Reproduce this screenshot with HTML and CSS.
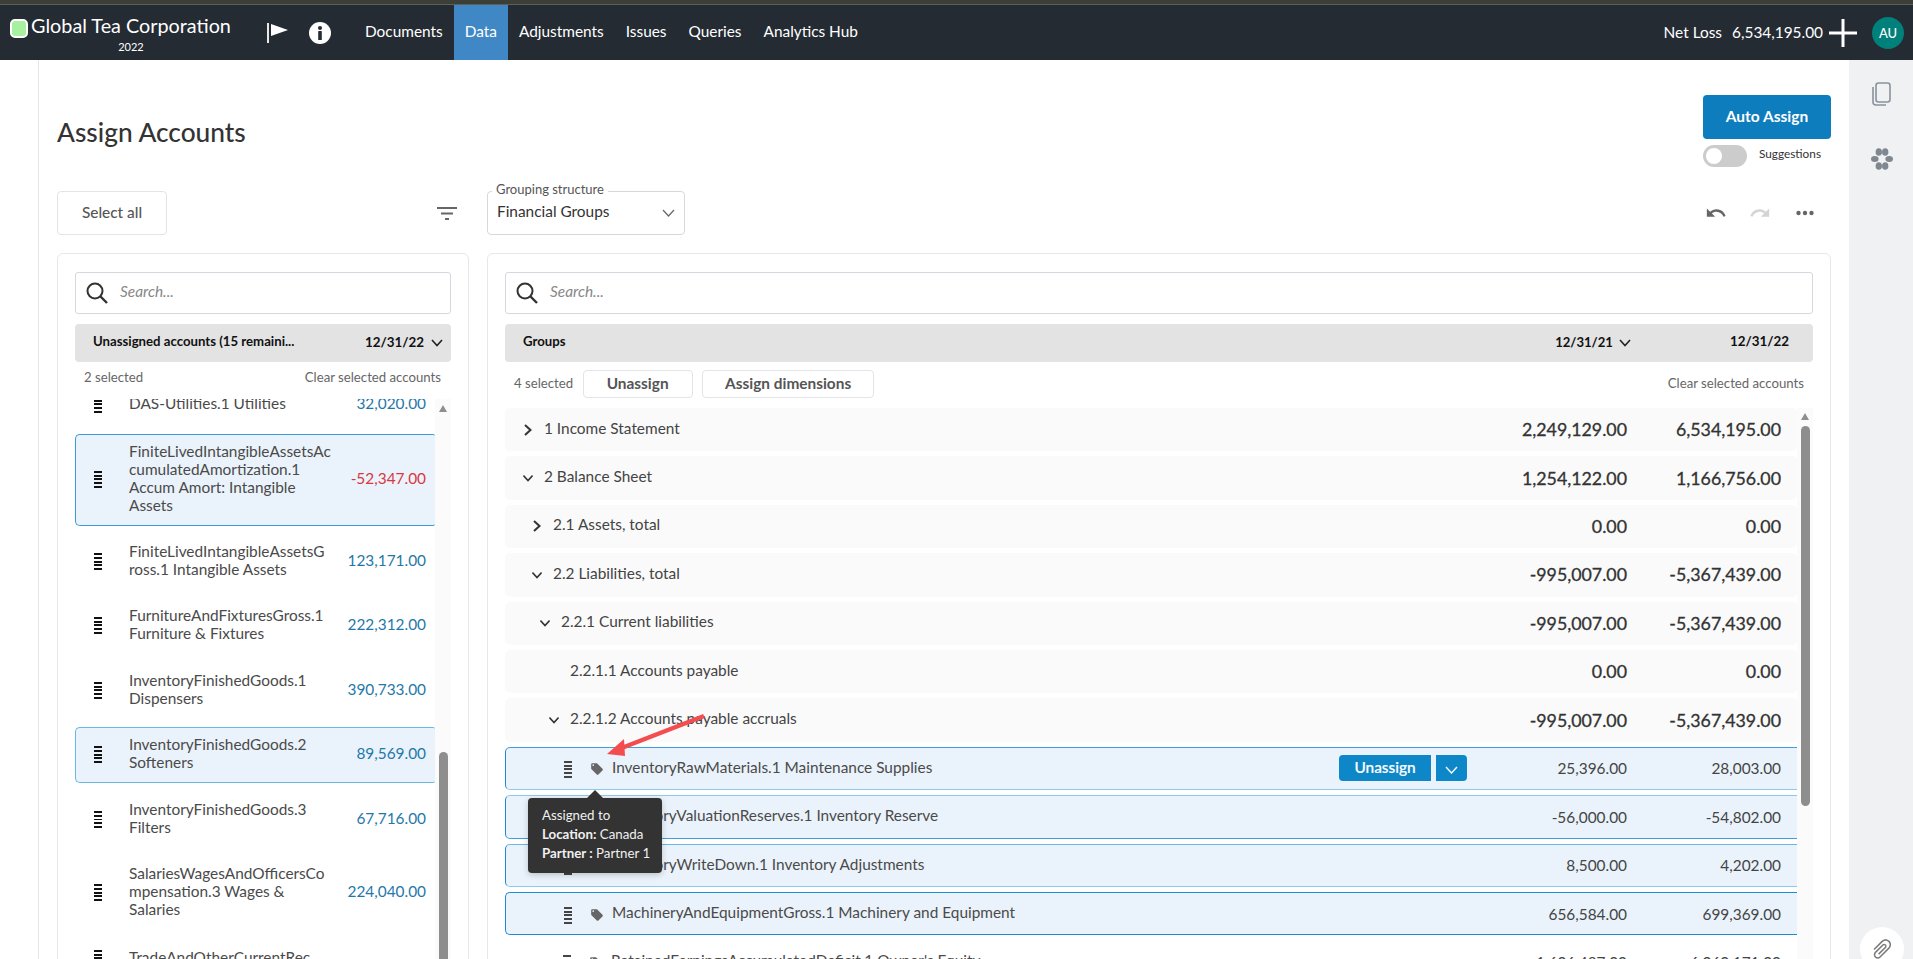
FILE: index.html
```html
<!DOCTYPE html>
<html>
	<head>
		<meta charset="UTF-8">
		<title>Assign Accounts</title>
		<link rel="stylesheet" href="styles.css">
	</head>
	<body>
		<div class="strip"></div>
		<header class="topbar">
			<div class="logo"></div>
			<div class="brand">
				<span class="brand-name">Global Tea Corporation</span>
				<span class="brand-year">2022</span>
			</div>
			<svg class="flag" width="21" height="20" viewBox="0 0 21 20"><rect x="0" y="0" width="2" height="20" fill="#e8e8e8"/><path d="M4 1 L21 7 L4 13 Z" fill="#fff"/></svg>
			<svg class="info" width="22" height="22" viewBox="0 0 22 22"><circle cx="11" cy="11" r="11" fill="#fff"/><circle cx="11" cy="6" r="2" fill="#242b33"/><rect x="9.2" y="9" width="3.6" height="9" rx="0.6" fill="#242b33"/></svg>
			<nav class="nav">
				<a>Documents</a>
				<a class="active">Data</a>
				<a>Adjustments</a>
				<a>Issues</a>
				<a>Queries</a>
				<a>Analytics Hub</a>
			</nav>
			<div class="net">
				<span>Net Loss</span>
				<span>6,534,195.00</span>
			</div>
			<svg class="plus" width="28" height="28" viewBox="0 0 28 28"><rect x="0" y="12.5" width="28" height="3" fill="#fff"/><rect x="12.5" y="0" width="3" height="28" fill="#fff"/></svg>
			<div class="avatar">AU</div>
		</header>

		<div class="content">
			<div class="gutter"></div>
			<main class="main">
				<div class="page-head">
					<h1>Assign Accounts</h1>
					<div class="auto-box">
						<button class="auto-btn">Auto Assign</button>
						<div class="toggle-row">
							<span class="toggle"><i></i></span>
							<span class="toggle-label">Suggestions</span>
						</div>
					</div>
				</div>

				<div class="toolbar">
					<button class="ghost-btn select-all">Select all</button>
					<svg class="filter" width="20" height="13" viewBox="0 0 20 13"><rect x="0" y="0" width="20" height="2" fill="#666"/><rect x="4" y="5.5" width="12" height="2" fill="#666"/><rect x="8" y="11" width="4" height="2" fill="#666"/></svg>
					<div class="select-box">
						<span class="legend">Grouping structure</span>
						<span class="select-value">Financial Groups</span>
						<svg width="13" height="8" viewBox="0 0 13 8"><path d="M1 1 L6.5 7 L12 1" fill="none" stroke="#666" stroke-width="1.2"/></svg>
					</div>
					<div class="history">
						<svg width="22" height="22" viewBox="0 0 24 24"><path fill="#666" d="M12.5 8c-2.65 0-5.05.99-6.9 2.6L2 7v9h9l-3.62-3.62c1.39-1.16 3.16-1.88 5.12-1.88 3.54 0 6.55 2.31 7.6 5.5l2.37-.78C21.08 11.03 17.15 8 12.5 8z"/></svg>
						<svg width="22" height="22" viewBox="0 0 24 24"><path fill="#d4d4d4" d="M18.4 10.6C16.55 8.99 14.15 8 11.5 8c-4.65 0-8.58 3.03-9.96 7.22L3.9 16c1.05-3.19 4.05-5.5 7.6-5.5 1.95 0 3.73.72 5.12 1.88L13 16h9V7l-3.6 3.6z"/></svg>
						<svg class="dots" width="18" height="6" viewBox="0 0 18 6"><circle cx="2.5" cy="3" r="2.2" fill="#666"/><circle cx="9" cy="3" r="2.2" fill="#666"/><circle cx="15.5" cy="3" r="2.2" fill="#666"/></svg>
					</div>
				</div>

				<div class="panels">
					<section class="panel panel-left">
						<div class="search">
							<svg width="22" height="22" viewBox="0 0 22 22"><circle cx="9" cy="9" r="7.5" fill="none" stroke="#333" stroke-width="2"/><path d="M14.5 14.5 L21 21" stroke="#333" stroke-width="2.4"/></svg>
							<span>Search...</span>
						</div>
						<div class="col-head">
							<b class="col-title">Unassigned accounts (15 remaini...</b>
							<b class="col-date">12/31/22</b>
							<svg width="12" height="8" viewBox="0 0 12 8"><path d="M1 1 L6 6.5 L11 1" fill="none" stroke="#222" stroke-width="1.6"/></svg>
						</div>
						<div class="sel-line">
							<span>2 selected</span>
							<span>Clear selected accounts</span>
						</div>
						<div class="scroll-area">
							<div class="acc-list">
								<div class="acc acc-clipped">
									<span class="grip"></span>
									<span class="acc-name">DAS-Utilities.1 Utilities</span>
									<span class="acc-val">32,020.00</span>
								</div>
								<div class="acc sel acc-first">
									<span class="grip"></span>
									<span class="acc-name">FiniteLivedIntangibleAssetsAc<br>cumulatedAmortization.1<br>Accum Amort: Intangible<br>Assets</span>
									<span class="acc-val neg">-52,347.00</span>
								</div>
								<div class="acc">
									<span class="grip"></span>
									<span class="acc-name">FiniteLivedIntangibleAssetsG<br>ross.1 Intangible Assets</span>
									<span class="acc-val">123,171.00</span>
								</div>
								<div class="acc">
									<span class="grip"></span>
									<span class="acc-name">FurnitureAndFixturesGross.1<br>Furniture &amp; Fixtures</span>
									<span class="acc-val">222,312.00</span>
								</div>
								<div class="acc">
									<span class="grip"></span>
									<span class="acc-name">InventoryFinishedGoods.1<br>Dispensers</span>
									<span class="acc-val">390,733.00</span>
								</div>
								<div class="acc sel soft">
									<span class="grip"></span>
									<span class="acc-name">InventoryFinishedGoods.2<br>Softeners</span>
									<span class="acc-val">89,569.00</span>
								</div>
								<div class="acc">
									<span class="grip"></span>
									<span class="acc-name">InventoryFinishedGoods.3<br>Filters</span>
									<span class="acc-val">67,716.00</span>
								</div>
								<div class="acc">
									<span class="grip"></span>
									<span class="acc-name">SalariesWagesAndOfficersCo<br>mpensation.3 Wages &amp;<br>Salaries</span>
									<span class="acc-val">224,040.00</span>
								</div>
								<div class="acc">
									<span class="grip"></span>
									<span class="acc-name">TradeAndOtherCurrentRec</span>
									<span class="acc-val"></span>
								</div>
							</div>
							<div class="track track-left">
								<i class="arrow"></i>
								<i class="thumb"></i>
							</div>
						</div>
					</section>

					<section class="panel panel-right">
						<div class="search">
							<svg width="22" height="22" viewBox="0 0 22 22"><circle cx="9" cy="9" r="7.5" fill="none" stroke="#333" stroke-width="2"/><path d="M14.5 14.5 L21 21" stroke="#333" stroke-width="2.4"/></svg>
							<span>Search...</span>
						</div>
						<div class="col-head">
							<b class="col-title">Groups</b>
							<span class="date-one">
								<b class="col-date">12/31/21</b>
								<svg width="12" height="8" viewBox="0 0 12 8"><path d="M1 1 L6 6.5 L11 1" fill="none" stroke="#222" stroke-width="1.6"/></svg>
							</span>
							<b class="col-date date-two">12/31/22</b>
						</div>
						<div class="action-line">
							<span class="count">4 selected</span>
							<button class="ghost-btn small wide-1">Unassign</button>
							<button class="ghost-btn small wide-2">Assign dimensions</button>
							<span class="clear">Clear selected accounts</span>
						</div>
						<div class="scroll-area">
							<div class="tree">
								<div class="row lvl-0">
									<svg class="chev" width="10" height="12" viewBox="0 0 10 12"><path d="M2 1 L7.5 6 L2 11" fill="none" stroke="#333" stroke-width="2"/></svg>
									<span class="name">1 Income Statement</span>
									<span class="amt big">2,249,129.00</span>
									<span class="amt big last">6,534,195.00</span>
								</div>
								<div class="row lvl-0">
									<svg class="chev" width="10" height="12" viewBox="0 0 12 12"><path d="M0.5 3 L6 9 L11.5 3" fill="none" stroke="#333" stroke-width="2"/></svg>
									<span class="name">2 Balance Sheet</span>
									<span class="amt big">1,254,122.00</span>
									<span class="amt big last">1,166,756.00</span>
								</div>
								<div class="row lvl-1">
									<svg class="chev" width="10" height="12" viewBox="0 0 10 12"><path d="M2 1 L7.5 6 L2 11" fill="none" stroke="#333" stroke-width="2"/></svg>
									<span class="name">2.1 Assets, total</span>
									<span class="amt big">0.00</span>
									<span class="amt big last">0.00</span>
								</div>
								<div class="row lvl-1">
									<svg class="chev" width="10" height="12" viewBox="0 0 12 12"><path d="M0.5 3 L6 9 L11.5 3" fill="none" stroke="#333" stroke-width="2"/></svg>
									<span class="name">2.2 Liabilities, total</span>
									<span class="amt big">-995,007.00</span>
									<span class="amt big last">-5,367,439.00</span>
								</div>
								<div class="row lvl-2">
									<svg class="chev" width="10" height="12" viewBox="0 0 12 12"><path d="M0.5 3 L6 9 L11.5 3" fill="none" stroke="#333" stroke-width="2"/></svg>
									<span class="name">2.2.1 Current liabilities</span>
									<span class="amt big">-995,007.00</span>
									<span class="amt big last">-5,367,439.00</span>
								</div>
								<div class="row lvl-3 no-chev">
									<span class="name">2.2.1.1 Accounts payable</span>
									<span class="amt big">0.00</span>
									<span class="amt big last">0.00</span>
								</div>
								<div class="row lvl-3">
									<svg class="chev" width="10" height="12" viewBox="0 0 12 12"><path d="M0.5 3 L6 9 L11.5 3" fill="none" stroke="#333" stroke-width="2"/></svg>
									<span class="name">2.2.1.2 Accounts payable accruals</span>
									<span class="amt big">-995,007.00</span>
									<span class="amt big last">-5,367,439.00</span>
								</div>
								<div class="row leaf sel edge-a">
									<span class="grip"></span>
									<svg class="tag" width="14" height="14" viewBox="0 0 24 24"><path fill="#666" d="M21.41 11.58l-9-9C12.05 2.22 11.55 2 11 2H4c-1.1 0-2 .9-2 2v7c0 .55.22 1.05.59 1.42l9 9c.36.36.86.58 1.41.58.55 0 1.05-.22 1.41-.59l7-7c.37-.36.59-.86.59-1.41 0-.55-.23-1.06-.59-1.42zM5.5 7C4.67 7 4 6.33 4 5.5S4.67 4 5.5 4 7 4.67 7 5.5 6.33 7 5.5 7z"/></svg>
									<span class="name">InventoryRawMaterials.1 Maintenance Supplies</span>
									<button class="blue-btn">Unassign</button>
									<button class="blue-btn caret"><svg width="13" height="8" viewBox="0 0 13 8"><path d="M1 1 L6.5 7 L12 1" fill="none" stroke="#fff" stroke-width="1.4"/></svg></button>
									<span class="amt">25,396.00</span>
									<span class="amt last">28,003.00</span>
									<svg class="red-arrow" width="120" height="45" viewBox="0 0 120 45"><path d="M28 36 L113 3" stroke="#f44d4f" stroke-width="4.5"/><path d="M16 41 L33 26 L34 43 Z" fill="#f44d4f"/></svg>
									<div class="tooltip">
										<div>Assigned to</div>
										<div><b>Location:</b> Canada</div>
										<div><b>Partner :</b> Partner 1</div>
									</div>
								</div>
								<div class="row leaf sel edge-b">
									<span class="grip"></span>
									<svg class="tag" width="14" height="14" viewBox="0 0 24 24"><path fill="#666" d="M21.41 11.58l-9-9C12.05 2.22 11.55 2 11 2H4c-1.1 0-2 .9-2 2v7c0 .55.22 1.05.59 1.42l9 9c.36.36.86.58 1.41.58.55 0 1.05-.22 1.41-.59l7-7c.37-.36.59-.86.59-1.41 0-.55-.23-1.06-.59-1.42zM5.5 7C4.67 7 4 6.33 4 5.5S4.67 4 5.5 4 7 4.67 7 5.5 6.33 7 5.5 7z"/></svg>
									<span class="name">InventoryValuationReserves.1 Inventory Reserve</span>
									<span class="amt">-56,000.00</span>
									<span class="amt last">-54,802.00</span>
								</div>
								<div class="row leaf sel edge-c">
									<span class="grip"></span>
									<svg class="tag" width="14" height="14" viewBox="0 0 24 24"><path fill="#666" d="M21.41 11.58l-9-9C12.05 2.22 11.55 2 11 2H4c-1.1 0-2 .9-2 2v7c0 .55.22 1.05.59 1.42l9 9c.36.36.86.58 1.41.58.55 0 1.05-.22 1.41-.59l7-7c.37-.36.59-.86.59-1.41 0-.55-.23-1.06-.59-1.42zM5.5 7C4.67 7 4 6.33 4 5.5S4.67 4 5.5 4 7 4.67 7 5.5 6.33 7 5.5 7z"/></svg>
									<span class="name">InventoryWriteDown.1 Inventory Adjustments</span>
									<span class="amt">8,500.00</span>
									<span class="amt last">4,202.00</span>
								</div>
								<div class="row leaf sel">
									<span class="grip"></span>
									<svg class="tag" width="14" height="14" viewBox="0 0 24 24"><path fill="#666" d="M21.41 11.58l-9-9C12.05 2.22 11.55 2 11 2H4c-1.1 0-2 .9-2 2v7c0 .55.22 1.05.59 1.42l9 9c.36.36.86.58 1.41.58.55 0 1.05-.22 1.41-.59l7-7c.37-.36.59-.86.59-1.41 0-.55-.23-1.06-.59-1.42zM5.5 7C4.67 7 4 6.33 4 5.5S4.67 4 5.5 4 7 4.67 7 5.5 6.33 7 5.5 7z"/></svg>
									<span class="name">MachineryAndEquipmentGross.1 Machinery and Equipment</span>
									<span class="amt">656,584.00</span>
									<span class="amt last">699,369.00</span>
								</div>
								<div class="row leaf plain">
									<span class="grip"></span>
									<svg class="tag" width="14" height="14" viewBox="0 0 24 24"><path fill="#666" d="M21.41 11.58l-9-9C12.05 2.22 11.55 2 11 2H4c-1.1 0-2 .9-2 2v7c0 .55.22 1.05.59 1.42l9 9c.36.36.86.58 1.41.58.55 0 1.05-.22 1.41-.59l7-7c.37-.36.59-.86.59-1.41 0-.55-.23-1.06-.59-1.42zM5.5 7C4.67 7 4 6.33 4 5.5S4.67 4 5.5 4 7 4.67 7 5.5 6.33 7 5.5 7z"/></svg>
									<span class="name">RetainedEarningsAccumulatedDeficit.1 Owner's Equity</span>
									<span class="amt">1,606,487.00</span>
									<span class="amt last">6,060,171.00</span>
								</div>
							</div>
							<div class="track track-right">
								<i class="arrow"></i>
								<i class="thumb"></i>
							</div>
						</div>
					</section>
				</div>
			</main>
			<aside class="side">
				<svg class="side-copy" width="20" height="24" viewBox="0 0 20 24"><rect x="5" y="1" width="14" height="19" rx="2.5" fill="none" stroke="#8a929c" stroke-width="1.6"/><path d="M2 5 V20 C2 22 3 23 5 23 H15" fill="none" stroke="#8a929c" stroke-width="1.6"/></svg>
				<svg class="side-paw" width="22" height="22" viewBox="0 0 22 22"><ellipse cx="7.8" cy="4" rx="3.2" ry="3.8" fill="#7f8891"/><ellipse cx="14.2" cy="4" rx="3.2" ry="3.8" fill="#7f8891"/><ellipse cx="3.8" cy="11" rx="3.8" ry="3" fill="#7f8891"/><ellipse cx="18.2" cy="11" rx="3.8" ry="3" fill="#7f8891"/><ellipse cx="7.8" cy="18" rx="3.2" ry="3.8" fill="#7f8891"/><ellipse cx="14.2" cy="18" rx="3.2" ry="3.8" fill="#7f8891"/></svg>
			</aside>
			<div class="clip-btn">
				<svg width="24" height="24" viewBox="0 0 24 24"><path fill="#7a7a7a" d="M16.5 6v11.5c0 2.21-1.79 4-4 4s-4-1.79-4-4V5c0-1.38 1.12-2.5 2.5-2.5s2.5 1.12 2.5 2.5v10.5c0 .55-.45 1-1 1s-1-.45-1-1V6H10v9.5c0 1.38 1.12 2.5 2.5 2.5s2.5-1.12 2.5-2.5V5c0-2.21-1.79-4-4-4S7 2.79 7 5v12.5c0 3.04 2.46 5.5 5.5 5.5s5.5-2.46 5.5-5.5V6h-1.5z"/></svg>
			</div>
		</div>
	</body>
</html>
```
FILE: styles.css
```css
*{
	margin: 0;
	padding: 0;
	box-sizing: border-box;
}
html,body{
	height: 100%;
	overflow: hidden;
}
body{
	font-family: "Lato", "Open Sans", sans-serif;
	font-size: 15.4px;
	color: #444;
	background: #fff;
}
button{
	font-family: inherit;
	cursor: pointer;
}

.strip{
	height: 5px;
	background: #3b3f36;
	border-bottom: 1px solid #5c6058;
}
.topbar{
	height: 55px;
	background: #242b33;
	color: #fff;
	display: flex;
	align-items: center;
	padding-left: 10px;
}
.logo{
	width: 18px;
	height: 19px;
	margin-top: -9px;
	background: #a6f09f;
	border: 2px solid #fff;
	border-radius: 5px;
}
.brand{
	width: 200px;
	margin: 2px 0 0 3px;
	display: flex;
	flex-direction: column;
	align-items: center;
}
.brand-name{
	font-size: 19.8px;
	line-height: 24px;
	white-space: nowrap;
}
.brand-year{
	font-size: 11px;
	line-height: 14px;
	margin-top: 3px;
}
.flag{
	margin-left: 36px;
}
.info{
	margin-left: 21px;
}
.nav{
	display: flex;
	height: 100%;
	margin-left: 23px;
}
.nav a{
	padding: 0 11px;
	line-height: 53px;
	white-space: nowrap;
}
.nav a.active{
	background: #3f88c5;
}
.net{
	margin: 0 0 2px auto;
	display: flex;
	gap: 10px;
	white-space: nowrap;
}
.plus{
	margin-left: 6px;
}
.avatar{
	width: 32px;
	height: 32px;
	margin: 0 9px 0 15px;
	border-radius: 50%;
	background: #00807b;
	font-size: 13px;
	font-weight: 500;
	line-height: 32px;
	text-align: center;
}

.content{
	display: flex;
	height: calc(100vh - 60px);
	position: relative;
	overflow: hidden;
}
.gutter{
	width: 39px;
	flex: none;
	border-right: 1px solid #e6e6e6;
}
.main{
	flex: 1;
	min-width: 0;
	padding: 35px 18px 0;
}
.page-head{
	display: flex;
	justify-content: space-between;
	align-items: center;
}
h1{
	font-family: "Lato Medium", "Lato", sans-serif;
	font-size: 26.3px;
	font-weight: 500;
	color: #333;
	margin-top: 2px;
}
.auto-box{
	width: 128px;
}
.auto-btn{
	display: block;
	width: 100%;
	height: 44px;
	padding-bottom: 2px;
	background: #0d7dbd;
	border: 0;
	border-radius: 4px;
	color: #fff;
	font-size: 15.5px;
	font-weight: 700;
}
.toggle-row{
	display: flex;
	margin-top: 6px;
}
.toggle{
	width: 44px;
	height: 22px;
	border-radius: 11px;
	background: #ccc;
	padding: 3px;
}
.toggle i{
	display: block;
	width: 16px;
	height: 16px;
	border-radius: 50%;
	background: #fff;
}
.toggle-label{
	margin-left: 12px;
	font-size: 11.8px;
	line-height: 18px;
	color: #333;
}

.toolbar{
	display: flex;
	align-items: center;
	height: 44px;
	margin-top: 24px;
}
.ghost-btn{
	background: #fff;
	border: 1px solid #e2e4e8;
	border-radius: 4px;
	color: #555;
	font-size: 15.4px;
	font-family: "Lato Medium", "Lato", sans-serif;
	font-weight: 500;
}
.select-all{
	width: 110px;
	height: 44px;
	padding-bottom: 2px;
}
.filter{
	margin-left: 270px;
}
.select-box{
	width: 198px;
	height: 44px;
	margin-left: 30px;
	border: 1px solid #d6d8dc;
	border-radius: 4px;
	position: relative;
	display: flex;
	align-items: center;
	justify-content: space-between;
	padding: 0 9px;
}
.legend{
	position: absolute;
	left: 4px;
	top: -11px;
	padding: 0 4px;
	background: #fff;
	font-size: 13px;
	line-height: 16px;
	color: #555;
}
.select-value{
	color: #333;
	margin-top: -5px;
}
.history{
	margin-left: auto;
	display: flex;
	align-items: center;
	gap: 22px;
	padding-right: 17px;
}
.dots{
	margin-left: 3.5px;
}

.panels{
	display: flex;
	gap: 18px;
	height: 760px;
	margin-top: 18px;
}
.panel{
	border: 1px solid #e6e7ea;
	border-radius: 6px;
	padding: 18px 17px 0;
	display: flex;
	flex-direction: column;
}
.panel-left{
	width: 412px;
}
.panel-right{
	flex: 1;
	min-width: 0;
}
.search{
	height: 42px;
	flex: none;
	border: 1px solid #d5d9df;
	border-radius: 3px;
	display: flex;
	align-items: center;
	padding-left: 10px;
}
.search span{
	margin-left: 12px;
	margin-top: -5px;
	font-style: italic;
	color: #888;
}
.col-head{
	height: 38px;
	flex: none;
	margin-top: 10px;
	background: #e3e3e3;
	border-radius: 4px;
	display: flex;
	align-items: center;
	padding: 0 8px 0 18px;
	color: #111;
	font-size: 13.2px;
}
.col-head b{
	font-weight: 700;
}
.col-head .col-title{
	flex: 1;
	margin-top: -4px;
	white-space: nowrap;
}
.col-date{
	font-size: 13.4px;
	margin-top: -2px;
}
.col-head svg{
	margin-left: 7px;
}
.date-one{
	display: flex;
	align-items: center;
}
.date-one .col-date{
	font-size: 13.1px;
}
.date-one svg{
	margin-left: 6px;
}
.date-two{
	margin: -4px 16px 0 99px;
}
.sel-line{
	height: 37px;
	flex: none;
	display: flex;
	justify-content: space-between;
	align-items: center;
	padding: 0 10px 7px 9px;
	font-size: 13.2px;
	color: #666;
}
.action-line{
	height: 46px;
	flex: none;
	display: flex;
	align-items: flex-start;
	padding: 8px 9px 0 9px;
	font-size: 13.2px;
	color: #666;
}
.count{
	line-height: 26px;
}
.small{
	height: 28px;
	margin-left: 9.5px;
	padding-bottom: 3px;
	font-family: "Lato", sans-serif;
	font-weight: 700;
}
.wide-1{
	width: 110px;
}
.wide-2{
	width: 172px;
}
.clear{
	margin-left: auto;
	line-height: 26px;
}

.scroll-area{
	flex: 1;
	min-height: 0;
	display: flex;
	overflow: hidden;
}
.acc-list{
	flex: 1;
	min-width: 0;
}
.tree{
	flex: 1;
	min-width: 0;
}
.track{
	width: 16px;
	flex: none;
	background: #fbfbfb;
	padding-left: 4px;
}
.arrow{
	display: block;
	width: 0;
	height: 0;
	border: 4.5px solid transparent;
	border-top: 0;
	border-bottom: 7px solid #8e8e8e;
}
.thumb{
	display: block;
	width: 9px;
	background: #8e8e8e;
	border-radius: 5px;
}
.track-left .arrow{
	margin-top: 5.5px;
}
.track-left .thumb{
	height: 400px;
	margin-top: 340px;
}
.track-right .arrow{
	margin-top: 5px;
}
.track-right .thumb{
	height: 380px;
	margin-top: 6px;
}

.acc{
	display: flex;
	align-items: center;
	padding: 7px 9px 10.5px 18px;
	margin-bottom: 9px;
	border: 1px solid transparent;
	border-right: 0;
	border-radius: 5px 2px 2px 5px;
	line-height: 18px;
}
.acc.sel{
	background: #eaf3fb;
	border-color: #3a9bd5;
	border-right: 0;
}
.acc.soft{
	border-color: #6db5e2;
}
.acc-clipped{
	margin-top: -14.5px;
	height: 40.5px;
	padding-bottom: 11.5px;
}
.acc-first{
	margin-bottom: 8px;
}
.grip{
	width: 8px;
	height: 17px;
	flex: none;
	margin-top: 3px;
	background: repeating-linear-gradient(#111 0, #111 2px, transparent 2px, transparent 3.75px);
}
.acc-name{
	width: 204px;
	margin-left: 27px;
	flex: none;
	white-space: nowrap;
	color: #4a4a4a;
}
.acc-val{
	margin-left: auto;
	color: #1f78a8;
}
.acc-val.neg{
	color: #d9373f;
}

.row{
	height: 43.4px;
	margin-bottom: 5px;
	background: #fafafa;
	border-radius: 5px;
	display: flex;
	align-items: center;
	padding-right: 16px;
	position: relative;
}
.lvl-0{
	padding-left: 18px;
}
.lvl-1{
	padding-left: 27px;
}
.lvl-2{
	padding-left: 35px;
}
.lvl-3{
	padding-left: 44px;
}
.no-chev{
	padding-left: 65px;
}
.chev{
	flex: none;
	margin-right: 11px;
}
.name{
	flex: 1;
	min-width: 0;
	margin-bottom: 4px;
	white-space: nowrap;
}
.amt{
	width: 153px;
	flex: none;
	text-align: right;
}
.amt.big{
	font-size: 17.8px;
	color: #333;
	margin-bottom: 1px;
	-webkit-text-stroke: 0.3px #333;
}
.amt.last{
	width: 154px;
}
.leaf{
	padding-left: 58px;
}
.leaf .grip{
	background: repeating-linear-gradient(#444 0, #444 2px, transparent 2px, transparent 3.75px);
}
.leaf.sel{
	background: #eaf3fb;
	border: 1px solid #1b8ccd;
	border-right: 0;
	border-radius: 5px 0 0 5px;
}
.leaf.plain{
	background: none;
}
.edge-a{
	border-top-color: #3f9fd8 !important;
	border-bottom-color: #8ccaec !important;
}
.edge-b{
	border-top-color: #8ccaec !important;
	border-bottom-color: #3f9fd8 !important;
}
.edge-c{
	border-top-color: #6bb7e3 !important;
	border-bottom-color: #8ccaec !important;
}
.tag{
	flex: none;
	margin: 2px 8px 0 18px;
}
.leaf .name{
	color: #4a4a4a;
	margin-bottom: 3px;
}
.blue-btn{
	width: 92px;
	height: 26px;
	flex: none;
	padding-bottom: 3px;
	background: #0e87c9;
	border: 0;
	border-radius: 4px 0 0 4px;
	color: #fff;
	font-size: 15.4px;
	font-family: "Lato Medium", "Lato", sans-serif;
	font-weight: 500;
	-webkit-text-stroke: 0.2px #fff;
}
.blue-btn.caret{
	width: 31px;
	padding-bottom: 0;
	margin: 0 7px 0 5px;
	border-radius: 0 4px 4px 0;
}
.red-arrow{
	position: absolute;
	left: 85px;
	top: -35px;
}
.tooltip{
	position: absolute;
	left: 22px;
	top: 50px;
	width: 134px;
	height: 75px;
	padding: 8px 0 0 14px;
	background: #333;
	border-radius: 4px;
	color: #f0f0f0;
	font-size: 13.3px;
	line-height: 19px;
	box-shadow: 0 2px 6px rgba(0,0,0,0.2);
	z-index: 2;
}
.tooltip::before{
	content: "";
	position: absolute;
	left: 59px;
	top: -8px;
	border: 8px solid transparent;
	border-top: 0;
	border-bottom-color: #333;
}

.side{
	width: 64px;
	flex: none;
	background: #f0f1f3;
	display: flex;
	flex-direction: column;
	align-items: center;
	padding: 22px 0 0 0;
}
.side-paw{
	margin: 42px 0 0 2px;
}
.clip-btn{
	position: absolute;
	right: 9px;
	top: 867px;
	width: 44px;
	height: 44px;
	border-radius: 50%;
	background: #fff;
	display: flex;
	align-items: center;
	justify-content: center;
}
.clip-btn svg{
	transform: rotate(-135deg);
}
```
